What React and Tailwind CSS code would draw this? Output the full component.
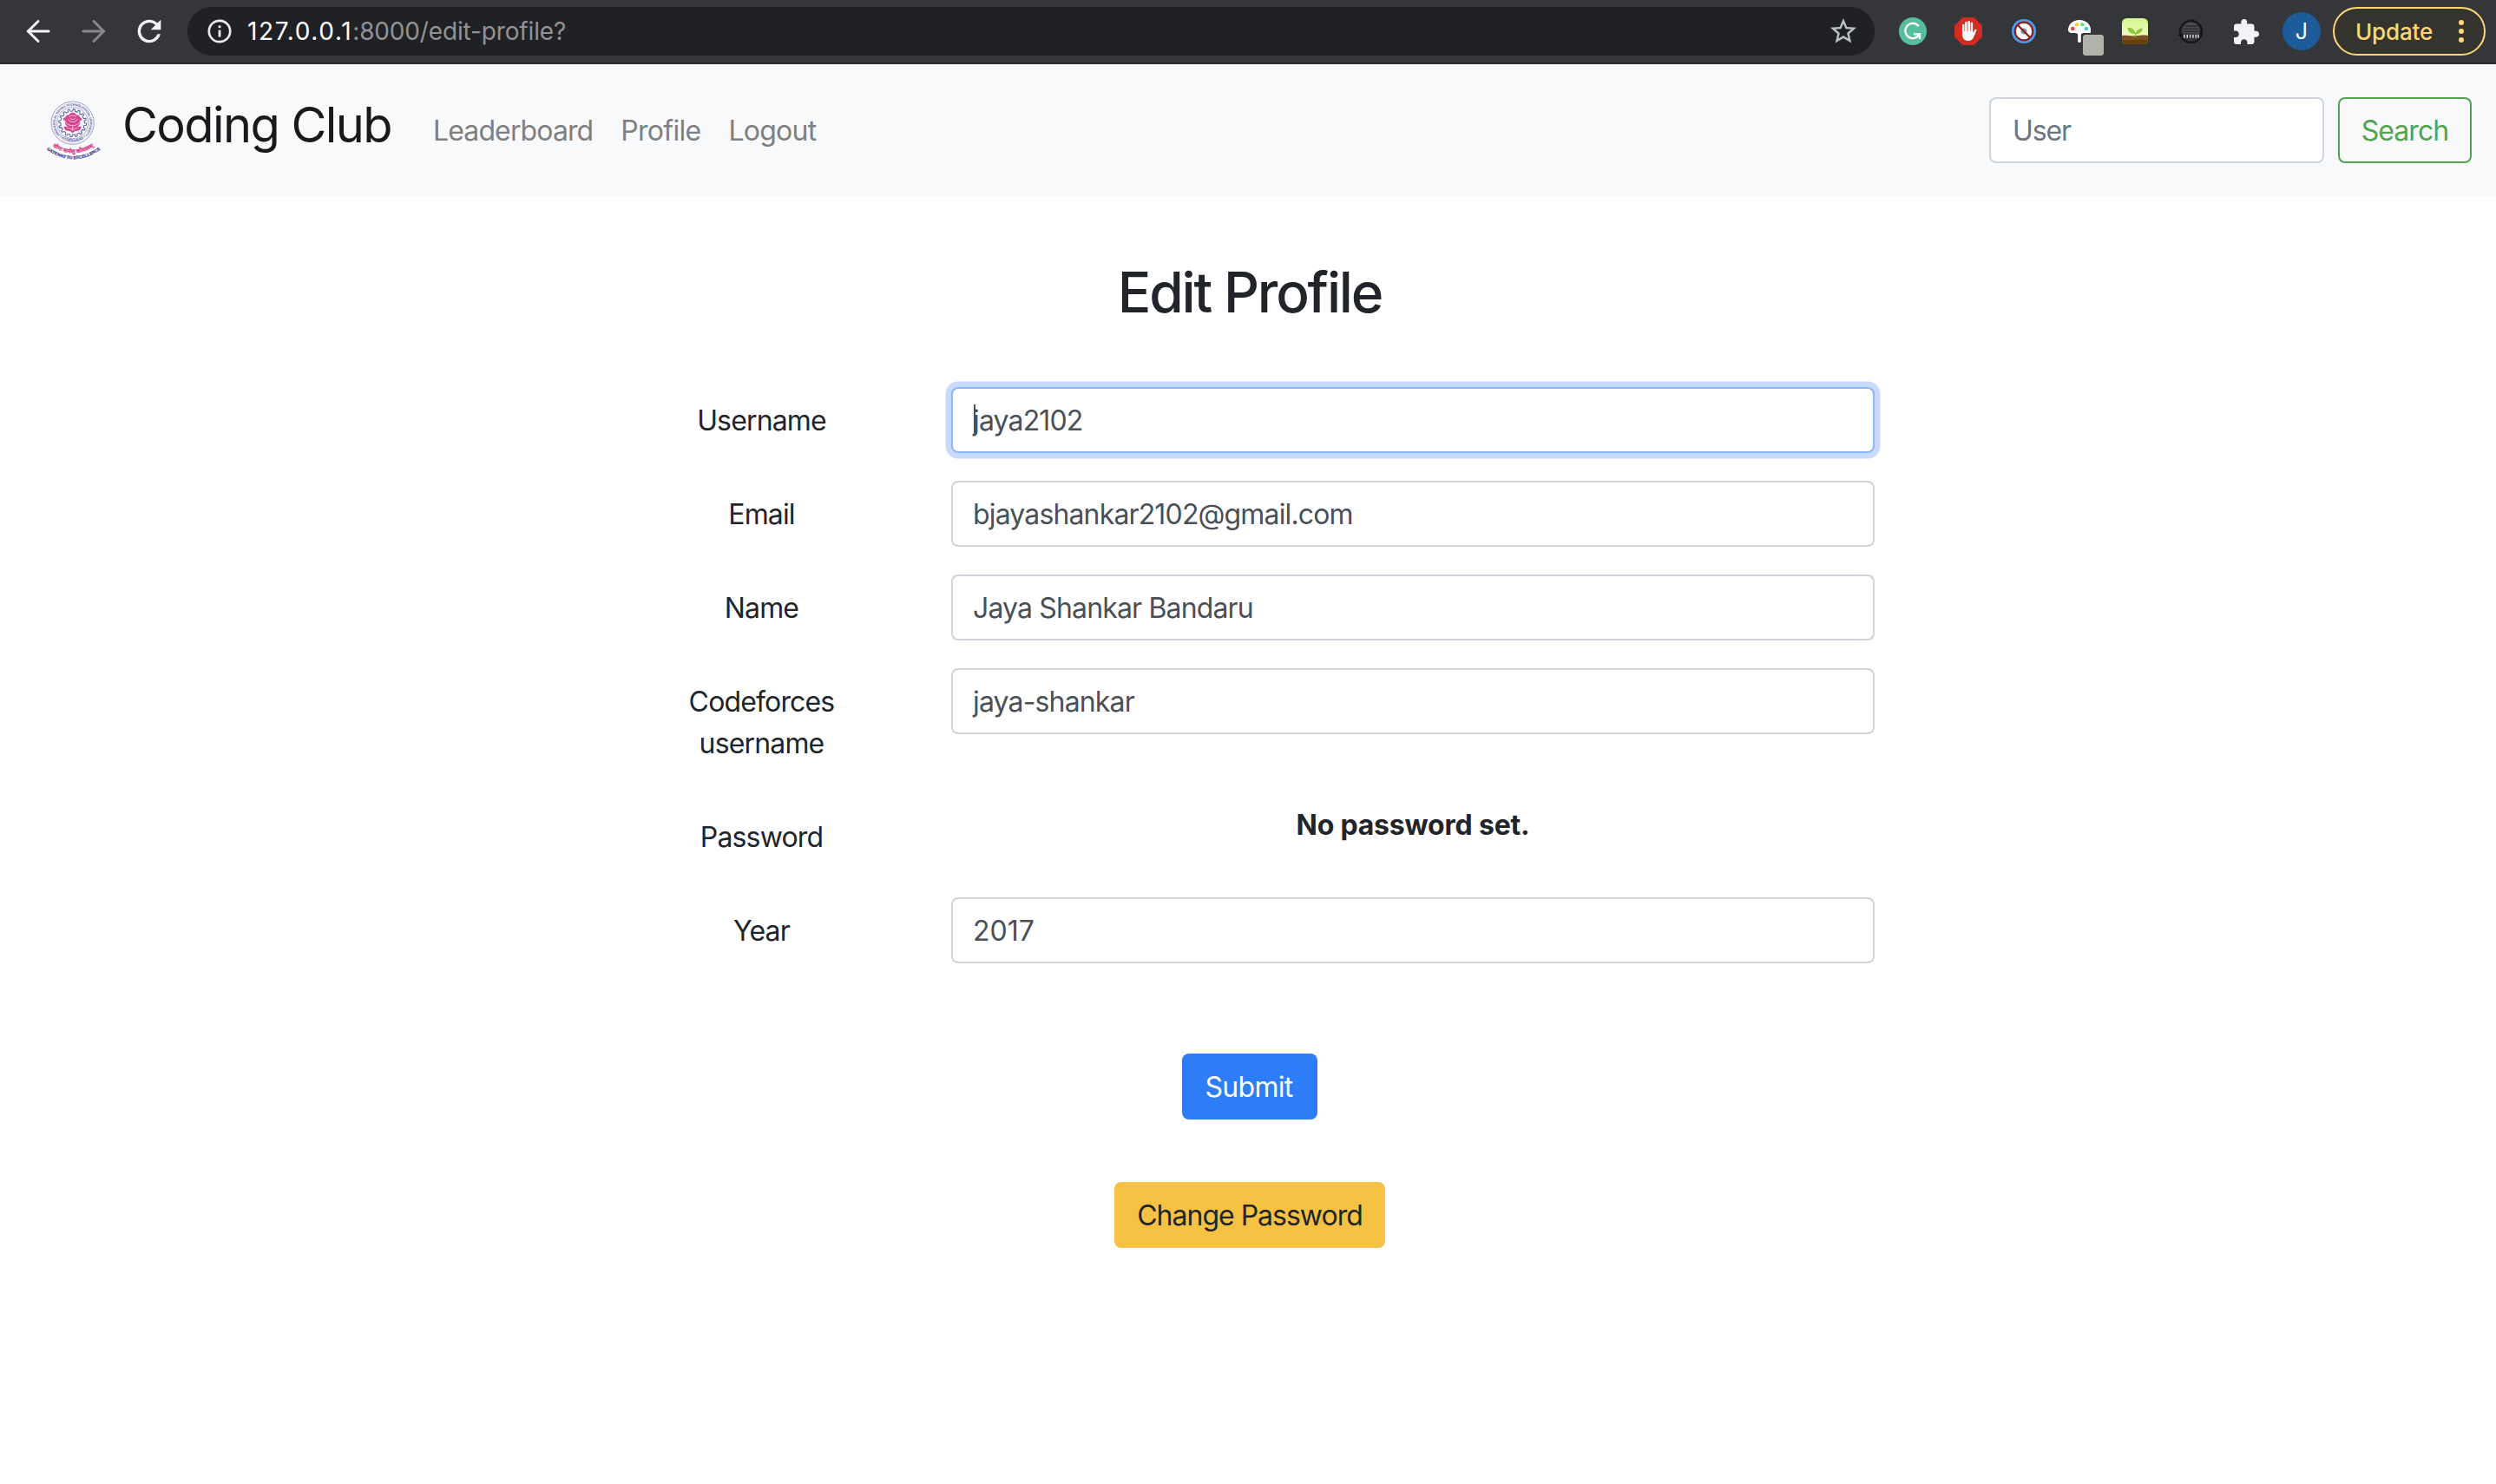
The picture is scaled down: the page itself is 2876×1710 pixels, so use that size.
import React from "react";

/* ---------- Browser toolbar icons ---------- */

function ArrowIcon({ forward }) {
  return (
    <svg width="28" height="28" viewBox="0 0 28 28" fill="none" strokeWidth="3" strokeLinecap="round" className={forward ? "-scale-x-100 stroke-[#86888b]" : "stroke-[#f1f3f4]"}>
      <path d="M26 14H2.500" />
      <path d="M14 2.500L2.500 14 14 25.500" strokeLinejoin="miter" />
    </svg>
  );
}

function ReloadIcon() {
  return (
    <svg width="40" height="40" viewBox="0 0 24 24" fill="#f1f3f4">
      <path d="M17.650 6.350A7.960 7.960 0 0 0 12 4a8 8 0 1 0 7.730 10h-2.080A6 6 0 1 1 12 6c1.660 0 3.140.690 4.220 1.780L13 11h7V4l-2.350 2.350z" />
    </svg>
  );
}

function InfoIcon() {
  return (
    <svg width="28" height="28" viewBox="0 0 28 28" fill="none" stroke="#e8eaed">
      <circle cx="14" cy="14" r="12.200" strokeWidth="2.700" />
      <path d="M14 12.600V20.600" strokeWidth="2.800" />
      <path d="M14 7.400V10.200" strokeWidth="2.800" />
    </svg>
  );
}

function StarIcon() {
  return (
    <svg width="36" height="36" viewBox="0 0 24 24" fill="#bdc1c6">
      <path d="M22 9.240l-7.190-.620L12 2 9.190 8.630 2 9.240l5.460 4.730L5.820 21 12 17.270 18.180 21l-1.630-7.030L22 9.240zM12 15.400l-3.760 2.270 1-4.280-3.320-2.880 4.380-.380L12 6.100l1.710 4.040 4.380.380-3.320 2.880 1 4.280L12 15.400z" />
    </svg>
  );
}

function GrammarlyIcon() {
  return (
    <svg width="32" height="32" viewBox="0 0 32 32" fill="none">
      <circle cx="16" cy="16" r="16" fill="#56be9c" />
      <path d="M22.800 10.200A8.600 8.600 0 1 0 23.600 19.600" stroke="#fff" strokeWidth="2.300" />
      <path d="M17 19.400H24V25" stroke="#fff" strokeWidth="2.300" />
    </svg>
  );
}

function StopHandIcon() {
  return (
    <svg width="32" height="32" viewBox="0 0 32 32">
      <path d="M9.400 0h13.200L32 9.400v13.200L22.600 32H9.400L0 22.600V9.400z" fill="#d32c20" />
      <g stroke="#fff" strokeLinecap="round" strokeWidth="2.500">
        <path d="M10.200 9V18M13.400 6V17M16.700 5.200V17M19.900 7V18" />
      </g>
      <path d="M9 16h12.200v2.600l2-4c.6-1.300 2.400-1.200 2.200.2-.1.900-1.700 4.300-2.900 7.300-1.100 2.800-2.800 4.900-6.300 4.900-4.400 0-7.200-2.400-7.200-7.500z" fill="#fff" />
    </svg>
  );
}

function BlockedIcon() {
  return (
    <svg width="28" height="28" viewBox="0 0 28 28">
      <circle cx="14" cy="14" r="14" fill="#4f9bee" />
      <circle cx="14" cy="14" r="11.400" fill="#8d1f1c" />
      <circle cx="14" cy="14" r="9.200" fill="#fff" />
      <circle cx="14" cy="14" r="3.600" fill="#7f98ad" />
      <path d="M6.800 6.800L21.200 21.200" stroke="#8d1f1c" strokeWidth="2.300" />
    </svg>
  );
}

function PaletteIcon() {
  return (
    <span className="relative block h-[26px] w-[26px]">
      <svg width="26" height="26" viewBox="0 0 26 26">
        <path d="M13 0C5.400 0 0 5 0 11.600c0 2.100 1.600 3.400 4 3.400h4.200c2 0 3 1 3 2.800V24.500c0 2 3.600 2 3.600 0v-6.700c0-1.800 1-2.800 3-2.800H26V11C26 5 20.600 0 13 0z" fill="#fff" />
        <circle cx="5.300" cy="10" r="2.300" fill="#e5453a" />
        <circle cx="10" cy="5.300" r="2.300" fill="#f7cd46" />
        <circle cx="16.300" cy="5.300" r="2.300" fill="#62e08a" />
        <circle cx="20.800" cy="10" r="2.300" fill="#4fc0e8" />
      </svg>
      <span className="absolute left-[17px] top-[17px] h-6 w-6 rounded-[3px] bg-[#b0b2a8]" />
    </span>
  );
}

function SproutIcon() {
  return (
    <svg width="30" height="30" viewBox="0 0 30 30">
      <defs>
        <linearGradient id="sky" x1="0" y1="0" x2="0" y2="1">
          <stop offset="0" stopColor="#d3f58c" />
          <stop offset="0.6" stopColor="#eefbbd" />
        </linearGradient>
        <clipPath id="tile"><rect width="30" height="30" rx="5.500" /></clipPath>
      </defs>
      <g clipPath="url(#tile)">
        <rect width="30" height="30" fill="url(#sky)" />
        <path d="M0 20c5-1 9 .8 15 .3s11-1.300 15-.3V30H0z" fill="#7d5220" />
        <path d="M0 25c8 1.500 20-1.500 30 0v5H0z" fill="#67400f" />
        <path d="M15.500 22c-.2-2 0-3.500.3-5" stroke="#7ab02f" strokeWidth="1.300" fill="none" />
        <path d="M15.500 18C9.500 18.400 7 15 6.400 10.800c5 0 8.600 2.400 9.100 7.200zM16 18c.4-4 3-6.200 7.800-6.200C23.300 16 20.600 18.400 16 18z" fill="#8dc63a" />
      </g>
    </svg>
  );
}

function DarkBadgeIcon() {
  return (
    <svg width="30" height="30" viewBox="0 0 30 30" fill="none">
      <circle cx="15.500" cy="15.500" r="12.500" stroke="#17181a" strokeWidth="2.400" />
      <path d="M13 3.500L18 0.800L20.500 4.500zM0.500 19.500l5.500-2.500v5.500zM27 13l1.600 8.500-4-1z" fill="#111214" />
      <path d="M6 13C8 6.500 12 4.800 15.500 4.800S23 6.500 25 13v5H6z" fill="#4a4b4e" />
      <path d="M8.500 9.200h14M7 12.400h17M6.500 15.400h18" stroke="#242528" strokeWidth="1.300" />
      <path d="M5.500 17.500h20v5.500h-20z" fill="#2a2b2d" />
      <path d="M8 18.800v4M11.300 18.800v4M14.600 18.800v4M17.900 18.800v4M21.200 18.800v4M24 18.800v4" stroke="#dcdcdc" strokeWidth="1.500" />
    </svg>
  );
}

function PuzzleIcon() {
  return (
    <svg width="29" height="29" viewBox="2 1 21 21" fill="#f1f3f4">
      <path d="M20.500 11H19V7c0-1.100-.9-2-2-2h-4V3.500C13 2.120 11.880 1 10.500 1S8 2.120 8 3.500V5H4c-1.100 0-1.990.9-1.990 2v3.800H3.500c1.490 0 2.700 1.210 2.700 2.700s-1.210 2.700-2.700 2.700H2V20c0 1.100.9 2 2 2h3.800v-1.500c0-1.490 1.210-2.700 2.700-2.700 1.490 0 2.700 1.210 2.700 2.700V22H17c1.100 0 2-.9 2-2v-4h1.500c1.380 0 2.500-1.120 2.500-2.500S21.880 11 20.500 11z" />
    </svg>
  );
}

function Cell({ children }) {
  return <div className="flex w-16 shrink-0 items-center justify-center">{children}</div>;
}

function BrowserBar() {
  return (
    <div className="flex h-[74px] items-stretch border-b-2 border-[#28292c] bg-[#35363a] pl-3 pr-3">
      <Cell><ArrowIcon /></Cell>
      <Cell><ArrowIcon forward /></Cell>
      <Cell><ReloadIcon /></Cell>
      <div className="my-2 ml-3 flex flex-1 items-center rounded-full bg-[#202124] pl-[23px] pr-[18px]">
        <InfoIcon />
        <div className="ml-[18px] flex-1 whitespace-nowrap text-[28px] leading-10">
          <span className="tracking-[1.64px] text-white">127.0.0.1</span>
          <span className="tracking-[-0.15px] text-[#929395]">:8000/edit-profile?</span>
        </div>
        <StarIcon />
      </div>
      <div className="ml-3 flex">
        <Cell><GrammarlyIcon /></Cell>
        <Cell><StopHandIcon /></Cell>
        <Cell><BlockedIcon /></Cell>
        <Cell><PaletteIcon /></Cell>
        <Cell><SproutIcon /></Cell>
        <Cell><DarkBadgeIcon /></Cell>
        <Cell><PuzzleIcon /></Cell>
        <Cell>
          <div className="flex h-11 w-11 items-center justify-center rounded-full bg-[#1d5b9b] text-[25px] leading-none text-white">J</div>
        </Cell>
      </div>
      <div className="my-2 ml-1 flex w-44 items-center justify-between rounded-full border-2 border-[#fdd675] bg-[#35332e] pl-6 pr-[23px] text-[26px] font-medium leading-none tracking-[-0.15px] text-[#fdd675]">
        <span className="pt-0.5">Update</span>
        <span className="flex flex-col gap-1">
          <i className="h-1.5 w-1.5 rounded-full bg-[#fdd675]" />
          <i className="h-1.5 w-1.5 rounded-full bg-[#fdd675]" />
          <i className="h-1.5 w-1.5 rounded-full bg-[#fdd675]" />
        </span>
      </div>
    </div>
  );
}

/* ---------- Site header ---------- */

const GEAR_TEETH = 16;
const gearPath = Array.from({ length: GEAR_TEETH }, (_, i) => {
  const step = (Math.PI * 2) / GEAR_TEETH;
  const at = (radius, turn) => {
    const a = (i + turn) * step;
    return `${(131 + radius * Math.cos(a)).toFixed(1)} ${(125 + radius * Math.sin(a)).toFixed(1)}`;
  };
  return `${i === 0 ? "M" : "L"}${at(41, 0)}L${at(48, 0.12)}L${at(48, 0.42)}L${at(41, 0.54)}`;
}).join("") + "Z";

function UniversityLogo() {
  return (
    <svg width="90" height="100" viewBox="0 0 270 300" fill="none">
      <defs>
        <path id="ring-top" d="M89 168A60 60 0 1 1 173 168" />
        <path id="ring-bottom" d="M79 165A66 66 0 0 0 183 165" />
        <path id="motto-pink" d="M54 202Q132 257 212 202" />
        <path id="motto-blue" d="M28 207Q134 292 240 207" />
      </defs>
      <circle cx="131" cy="125" r="74" stroke="#a3a4cb" strokeWidth="3" fill="#eff0f8" />
      <circle cx="131" cy="125" r="54" stroke="#9c9dc8" strokeWidth="2.500" fill="#fbfbfe" />
      <path d={gearPath} stroke="#5f60a2" strokeWidth="3.200" />
      <g fill="#d9418f">
        <path d="M131 89c7 0 11 5 13 9 6-1 11 2 12 8 5 1 8 4 7 9l-6 6c2 5-2 10-6 14-5 5-13 7-20 7s-15-2-20-7c-4-4-8-9-6-14l-6-6c-1-5 2-8 7-9 1-6 6-9 12-8 2-4 6-9 13-9z" />
        <path d="M131 161c-5-8-12-10-21-9-6-3-8-8-9-14 12-2 22 0 30 6 8-6 18-8 30-6-1 6-3 11-9 14-9-1-16 1-21 9z" />
      </g>
      <g stroke="#f9dcea" strokeWidth="2.600">
        <path d="M119 104c6-6 18-6 24 0M115 112c5 12 26 14 33 0M122 109c4 5 14 5 18 0" />
        <path d="M103 114c4 12 14 20 28 20 14 0 24-8 28-20M131 136v16M110 142c8 0 16 3 20 8M152 142c-8 0-16 3-20 8" />
      </g>
      <g fontFamily="Liberation Sans" fontWeight="700" fill="#5f60a2">
        <text fontSize="10.800" textAnchor="middle"><textPath href="#ring-top" startOffset="50%">JAWAHARLAL NEHRU TECHNOLOGICAL UNIVERSITY</textPath></text>
        <text fontSize="13" textAnchor="middle"><textPath href="#ring-bottom" startOffset="50%">• HYDERABAD •</textPath></text>
      </g>
      <text fontFamily="Noto Sans, sans-serif" fontWeight="700" fontSize="19.500" fill="#d9418f" stroke="#d9418f" strokeWidth="0.800" textAnchor="middle"><textPath href="#motto-pink" startOffset="50%">योगः कर्मसु कौशलम्</textPath></text>
      <text fontFamily="Liberation Serif" fontWeight="700" fontSize="14.500" fill="#43458f" stroke="#43458f" strokeWidth="0.800" textAnchor="middle"><textPath href="#motto-blue" startOffset="50%">GATEWAY TO EXCELLENCE</textPath></text>
    </svg>
  );
}

function SiteHeader() {
  return (
    <header className="flex h-[152px] items-center bg-[#f8f9fb] pl-10 pr-7 text-[32px] leading-[48px]">
      <div className="flex items-center">
        <UniversityLogo />
        <span className="mb-[13px] ml-[11px] whitespace-nowrap text-[56px] leading-[84px] tracking-[-1.58px] text-[#18191a]">Coding Club</span>
      </div>
      <nav className="ml-[48px] mt-0.5 flex gap-8 text-[#7e7f80]">
        <a className="tracking-[-0.88px]">Leaderboard</a>
        <a className="tracking-[-0.72px]">Profile</a>
        <a className="tracking-[-0.75px]">Logout</a>
      </nav>
      <form className="ml-auto flex gap-4">
        <div className="h-[76px] w-[386px] rounded-lg border-2 border-[#ced4da] bg-white pl-[25px] pt-[13px] tracking-[-1.1px] text-[#6c757d]">User</div>
        <button type="button" className="h-[76px] w-[154px] rounded-lg border-2 border-[#51a551] pt-0.5 tracking-[-0.95px] text-[#51a551]">Search</button>
      </form>
    </header>
  );
}

/* ---------- Form ---------- */

function Row({ label, children }) {
  return (
    <div className="grid grid-cols-[315px_1064px] gap-x-[61px]">
      <label className="px-10 pb-[13px] pt-[15px] text-center">{label}</label>
      <div>{children}</div>
    </div>
  );
}

function Field({ value, focused }) {
  return (
    <div className={focused
      ? "relative h-[76px] rounded-lg border-2 border-[#8ab9f8] bg-white pl-[23px] pt-[13px] text-[#495057] shadow-[0_0_0_6.4px_#c9dbfd]"
      : "h-[76px] rounded-lg border-2 border-[#ced4da] bg-white pl-[23px] pt-[13px] text-[#495057]"}>
      {focused && <span className="absolute left-6 top-[18px] h-9 w-0.5 bg-[#495057]" />}
      {value}
    </div>
  );
}

export default function App() {
  return (
    <div className="min-h-[1710px] bg-white font-['Inter',sans-serif] text-[#212529]">
      <BrowserBar />
      <SiteHeader />
      <main className="pl-1">
        <div className="mx-auto flex w-[1440px] flex-col pt-[73px] text-[32px] leading-[48px] tracking-[-0.85px]">
          <h1 className="text-center text-[64px] font-medium leading-[76px] tracking-[-2.2px]">Edit Profile</h1>
          <div className="mt-[71px] flex flex-col gap-8">
            <Row label="Username"><Field focused value="jaya2102" /></Row>
            <Row label="Email"><Field value="bjayashankar2102@gmail.com" /></Row>
            <Row label="Name"><Field value="Jaya Shankar Bandaru" /></Row>
            <Row label="Codeforces username"><Field value="jaya-shankar" /></Row>
            <Row label="Password"><p className="pt-px text-center font-bold tracking-[-0.2px]">No password set.</p></Row>
            <Row label="Year"><Field value={<span className="tracking-normal">2017</span>} /></Row>
          </div>
          <div className="mt-[104px] flex flex-col items-center gap-[72px]">
            <button type="button" className="h-[76px] w-[156px] rounded-lg bg-[#2d7df6] pr-0.5 pt-0.5 tracking-[-0.7px] text-white">Submit</button>
            <button type="button" className="h-[76px] w-[312px] rounded-lg bg-[#f6c244] pt-0.5 tracking-[-1px]">Change Password</button>
          </div>
        </div>
      </main>
    </div>
  );
}
